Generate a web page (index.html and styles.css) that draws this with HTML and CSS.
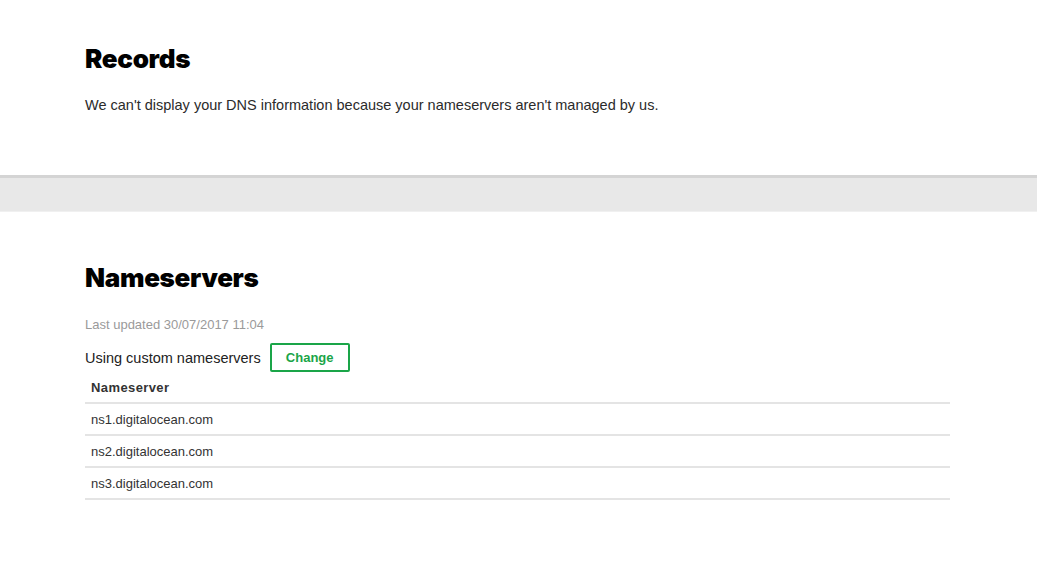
FILE: index.html
```html
<!DOCTYPE html>
<html>
<head>
<meta charset="utf-8">
<link rel="stylesheet" href="styles.css">
</head>
<body>
<section class="section records">
  <h2 class="title">Records</h2>
  <p class="lead">We can't display your DNS information because your nameservers aren't managed by us.</p>
</section>
<div class="band"></div>
<section class="section ns">
  <h2 class="title">Nameservers</h2>
  <p class="updated">Last updated 30/07/2017 11:04</p>
  <div class="using">
    <span>Using custom nameservers</span>
    <button class="btn">Change</button>
  </div>
  <table class="table">
    <thead><tr><th>Nameserver</th></tr></thead>
    <tbody>
      <tr><td>ns1.digitalocean.com</td></tr>
      <tr><td>ns2.digitalocean.com</td></tr>
      <tr><td>ns3.digitalocean.com</td></tr>
    </tbody>
  </table>
</section>
</body>
</html>
```
FILE: styles.css
```css
html, body { margin: 0; padding: 0; background: #fff; }
body { font-family: "Liberation Sans", Arial, sans-serif; color: #222; }
.section { padding-left: 85px; padding-right: 87px; }
.records { padding-top: 43px; height: 175px; box-sizing: border-box; }
.title {
  margin: 0;
  font-family: Inter, "DejaVu Sans", sans-serif;
  font-weight: 900;
  font-size: 26px;
  line-height: 32px;
  letter-spacing: -0.3px;
  color: #000;
}
.lead { margin: 20px 0 0; font-size: 14.5px; line-height: 20px; color: #2b2b2b; }
.band {
  height: 33px;
  background: #e8e8e8;
  border-top: 3px solid #d4d4d4;
  border-bottom: 1px solid #f0f0f0;
}
.ns { padding-top: 50px; }
.updated { margin: 23px 0 0; font-size: 13px; line-height: 16px; color: #9a9a9a; }
.using { display: flex; align-items: center; margin-top: 10px; font-size: 14.5px; color: #222; }
.btn {
  margin-left: 9px;
  width: 80px; height: 29px;
  border: 2px solid #1aa548;
  border-radius: 2px;
  background: #fff;
  color: #1aa548;
  font-family: "Liberation Sans", Arial, sans-serif;
  font-weight: 700;
  font-size: 13px;
  padding: 0;
}
.table { width: 100%; border-collapse: collapse; margin-top: 0; }
.table th, .table td {
  text-align: left;
  padding: 0 6px;
  height: 30px;
  border-bottom: 2px solid #e4e4e4;
  font-size: 13px;
}
.table th { font-weight: 700; color: #333; letter-spacing: 0.4px; }
.table td { color: #333; }
```
